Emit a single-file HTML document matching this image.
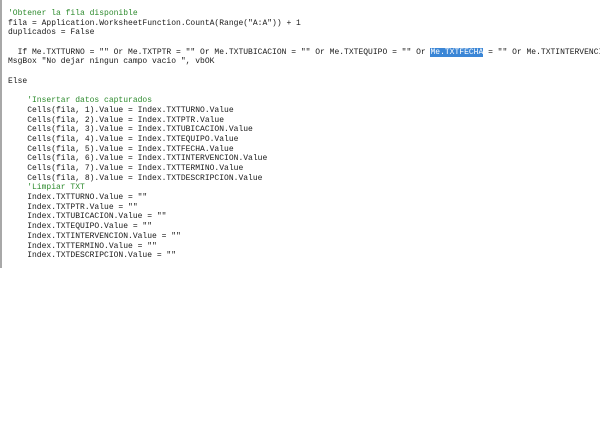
<!DOCTYPE html>
<html><head><meta charset="utf-8"><style>
html,body{margin:0;padding:0;background:#fff;width:600px;height:422px;overflow:hidden;position:relative}
.bar{position:absolute;left:0;top:0;width:2px;height:268px;background:#a8a8a8}
.wrap{position:absolute;left:8px;top:9px;width:592px;height:260px;overflow:hidden}
pre{margin:0;font-family:"Liberation Mono",monospace;font-size:8px;line-height:9.69px;color:#1a1a1a;white-space:pre}
.c{color:#2e8b2e}
.h{background:#3b86d6;color:#fff}
</style></head><body>
<div class="bar"></div>
<div class="wrap"><pre><span class="c">'Obtener la fila disponible</span>
fila = Application.WorksheetFunction.CountA(Range("A:A")) + 1
duplicados = False

  If Me.TXTTURNO = "" Or Me.TXTPTR = "" Or Me.TXTUBICACION = "" Or Me.TXTEQUIPO = "" Or <span class="h">Me.TXTFECHA</span> = "" Or Me.TXTINTERVENCION = "" Or
MsgBox "No dejar ningun campo vacio ", vbOK

Else

    <span class="c">'Insertar datos capturados</span>
    Cells(fila, 1).Value = Index.TXTTURNO.Value
    Cells(fila, 2).Value = Index.TXTPTR.Value
    Cells(fila, 3).Value = Index.TXTUBICACION.Value
    Cells(fila, 4).Value = Index.TXTEQUIPO.Value
    Cells(fila, 5).Value = Index.TXTFECHA.Value
    Cells(fila, 6).Value = Index.TXTINTERVENCION.Value
    Cells(fila, 7).Value = Index.TXTTERMINO.Value
    Cells(fila, 8).Value = Index.TXTDESCRIPCION.Value
    <span class="c">'Limpiar TXT</span>
    Index.TXTTURNO.Value = ""
    Index.TXTPTR.Value = ""
    Index.TXTUBICACION.Value = ""
    Index.TXTEQUIPO.Value = ""
    Index.TXTINTERVENCION.Value = ""
    Index.TXTTERMINO.Value = ""
    Index.TXTDESCRIPCION.Value = ""</pre></div>
</body></html>
